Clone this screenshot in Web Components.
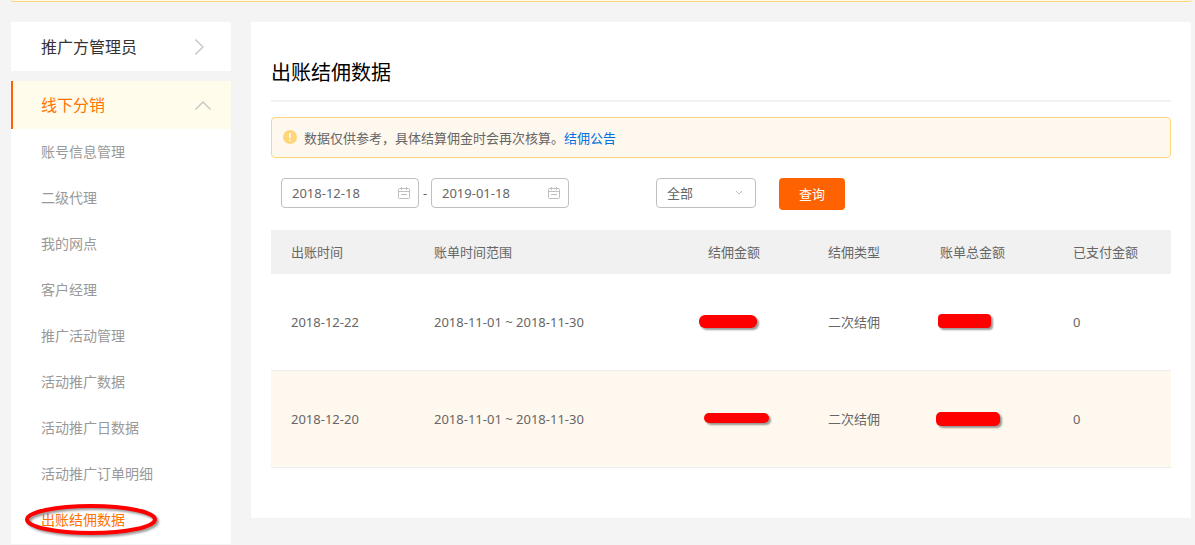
<!DOCTYPE html>
<html lang="zh-CN">
<head>
<meta charset="utf-8">
<meta name="viewport" content="width=device-width, initial-scale=1">
<title>出账结佣数据</title>
<style>
body { margin: 0; background: #f4f4f4; color: #666; font: 13px/20px "Noto Sans", "Noto Sans CJK SC", sans-serif; }
</style>
</head>
<body>
<app-shell>
  <side-nav slot="nav">
    <nav-group label="推广方管理员"></nav-group>
    <nav-group label="线下分销" open>
      <nav-item>账号信息管理</nav-item>
      <nav-item>二级代理</nav-item>
      <nav-item>我的网点</nav-item>
      <nav-item>客户经理</nav-item>
      <nav-item>推广活动管理</nav-item>
      <nav-item>活动推广数据</nav-item>
      <nav-item>活动推广日数据</nav-item>
      <nav-item>活动推广订单明细</nav-item>
      <nav-item current>出账结佣数据</nav-item>
    </nav-group>
  </side-nav>
  <page-panel heading="出账结佣数据">
    <notice-bar link="结佣公告">数据仅供参考，具体结算佣金时会再次核算。</notice-bar>
    <filter-bar></filter-bar>
    <bill-table></bill-table>
  </page-panel>
</app-shell>
<script>
const define = (name, render) => customElements.define(name, class extends HTMLElement {
  constructor() {
    super();
    this.attachShadow({ mode: 'open' });
  }
  connectedCallback() {
    this.shadowRoot.innerHTML = '<style>:host{display:block}*{box-sizing:border-box}</style>' + render(this);
  }
});

define('app-shell', () => `
<style>
  .strip { height: 2px; border: 1px solid #ffd57a; border-top: 0; border-radius: 0 0 4px 4px; background: #fffbe8; }
  :host { padding: 0 4px 0 11px; }
  .columns { display: flex; align-items: flex-start; gap: 20px; padding-top: 20px; }
  ::slotted(side-nav) { flex: 0 0 220px; }
  ::slotted(page-panel) { flex: 1; min-width: 0; }
</style>
<div class="strip"></div>
<div class="columns"><slot name="nav"></slot><slot></slot></div>`);

define('side-nav', () => `
<style>nav { display: flex; flex-direction: column; gap: 10px; }</style>
<nav aria-label="主菜单"><slot></slot></nav>`);

define('nav-group', el => {
  const open = el.hasAttribute('open');
  return `
<style>
  :host { background: #fff; }
  :host([open]) { padding-bottom: 1px; }
  button { display: flex; width: 100%; height: 49px; align-items: center; justify-content: space-between;
    padding: 0 20px 0 30px; border: 0; background: none; color: #333; font: inherit; font-size: 16px; line-height: 24px; text-align: left; }
  button.open { height: 48px; padding-left: 28px; border-left: 2px solid #ff6200; background: #fffceb; color: #ff7300; }
  svg { fill: none; stroke: #c4c4c4; stroke-width: 1.3; overflow: visible; }
</style>
<button type="button" class="${open ? 'open' : ''}" aria-expanded="${open}">${el.getAttribute('label')}
  ${open
    ? '<svg width="16" height="16" viewBox="0 0 16 16"><path d="M.5 12.500 8 5l7.500 7.500"/></svg>'
    : '<svg width="16" height="16" viewBox="0 0 16 16"><path d="M.3.500 8 8 .3 15.500"/></svg>'}
</button>
<slot></slot>`;
});

define('nav-item', el => `
<style>
  :host { position: relative; }
  a { display: block; padding: 13px 30px; color: #999; font-size: 14px; line-height: 20px; text-decoration: none; }
  :host([current]) a { color: #ff7300; }
  svg { position: absolute; left: 12px; top: 4px; overflow: visible; pointer-events: none; filter: drop-shadow(2px 2px 1px #0006); }
</style>
<a href="#"${el.hasAttribute('current') ? ' aria-current="page"' : ''}><slot></slot></a>
${el.hasAttribute('current') ? '<svg width="136" height="36" viewBox="0 0 136 36"><ellipse cx="68" cy="18.500" rx="64" ry="13.500" fill="none" stroke="red" stroke-width="4"/></svg>' : ''}`);

define('page-panel', el => `
<style>
  :host { background: #fff; }
  section { padding: 30px 20px 50px; }
  h1 { margin: 0 0 15px; padding: 6px 0 12px; border-bottom: 2px solid #f1f1f1; color: #000; font-size: 20px; line-height: 30px; font-weight: 400; }
</style>
<section><h1>${el.getAttribute('heading')}</h1><slot></slot></section>`);

define('notice-bar', el => `
<style>
  :host { border: 1px solid #ffd57a; border-radius: 4px; background: #fff8ee; }
  p { display: flex; align-items: center; margin: 0; padding: 10px 10px 9px; }
  svg { margin: 0 7px 2px 1px; }
  a { color: #0070dd; text-decoration: none; }
</style>
<p><svg width="14" height="14" viewBox="0 0 14 14"><circle cx="7" cy="7" r="7" fill="#ffd57a"/><path d="M7 3v5M7 9.500v1.500" stroke="#fff" stroke-width="1.500"/></svg><slot></slot><a href="#">${el.getAttribute('link')}</a></p>`);

define('date-field', el => `
<style>
  :host { flex: 0 0 138px; }
  label { display: flex; align-items: center; height: 30px; padding: 0 8px 0 10px; border: 1px solid #bfbfbf; border-radius: 4px; background: #fff; }
  input { flex: 1; width: 0; min-width: 0; padding: 0; border: 0; outline: 0; background: none; color: #666; font: inherit; }
</style>
<label><input type="text" aria-label="${el.getAttribute('label')}" value="${el.getAttribute('value')}">
<svg width="12" height="12" viewBox="0 0 12 12" fill="none" stroke="#bfbfbf"><rect x=".5" y="1.500" width="11" height="10" rx="1"/><path d="M3.500 0v3M8.500 0v3M.5 4.500h11M3 7.500h6"/></svg></label>`);

define('filter-bar', () => `
<style>
  form { display: flex; align-items: flex-start; padding: 20px 10px; }
  .dash { width: 12px; line-height: 30px; text-align: center; }
  .pick { position: relative; margin: 0 23px 0 87px; }
  select { display: block; width: 100px; height: 30px; padding: 0 10px; border: 1px solid #bfbfbf; border-radius: 4px; appearance: none; background: #fff; color: #666; font: inherit; }
  .pick svg { position: absolute; right: 13px; top: 11px; pointer-events: none; }
  button { width: 66px; height: 32px; padding: 0; border: 0; border-radius: 4px; background: #ff6200; color: #fff; font: inherit; }
</style>
<form>
  <date-field label="开始日期" value="2018-12-18"></date-field><span class="dash">-</span>
  <date-field label="结束日期" value="2019-01-18"></date-field>
  <div class="pick"><select aria-label="结佣类型"><option>全部</option></select>
    <svg width="8" height="8" viewBox="0 0 8 8" fill="none" stroke="#bfbfbf"><path d="M1 2 4 5 7 2"/></svg></div>
  <button type="button">查询</button>
</form>`);

define('masked-value', el => {
  const [x, y, w, h, r] = el.getAttribute('box').split(' ');
  return `
<style>
  :host { position: relative; height: 20px; }
  span { position: absolute; left: ${x}px; top: ${y}px; width: ${w}px; height: ${h}px; border-radius: ${r}px; background: red; box-shadow: 2px 2px 2px #0006; }
</style><span></span>`;
});

define('bill-table', () => {
  const rows = [
    ['2018-12-22', '-9 3 58 13 6', '-2 2 53 14 4'],
    ['2018-12-20', '-4 4 65 10 5', '-4 3 64 14 5']
  ];
  return `
<style>
  table { width: 100%; table-layout: fixed; border-collapse: separate; border-spacing: 0; font-size: 13px; line-height: 20px; }
  th, td { padding: 0 0 0 20px; text-align: left; font-weight: 400; white-space: nowrap; }
  th { height: 44px; background: #f1f1f1; }
  td { height: 97px; border-bottom: 1px solid #ededed; }
  tbody tr:nth-child(even) td { background: #fff8ee; }
</style>
<table>
  <colgroup><col style="width:143px"><col style="width:274px"><col style="width:120px"><col style="width:112px"><col style="width:133px"><col style="width:118px"></colgroup>
  <thead><tr>${['出账时间', '账单时间范围', '结佣金额', '结佣类型', '账单总金额', '已支付金额'].map(t => `<th scope="col">${t}</th>`).join('')}</tr></thead>
  <tbody>${rows.map(([date, a, b]) => `<tr><td>${date}</td><td>2018-11-01 ~ 2018-11-30</td><td><masked-value box="${a}"></masked-value></td><td>二次结佣</td><td><masked-value box="${b}"></masked-value></td><td>0</td></tr>`).join('')}</tbody>
</table>`;
});
</script>
</body>
</html>
